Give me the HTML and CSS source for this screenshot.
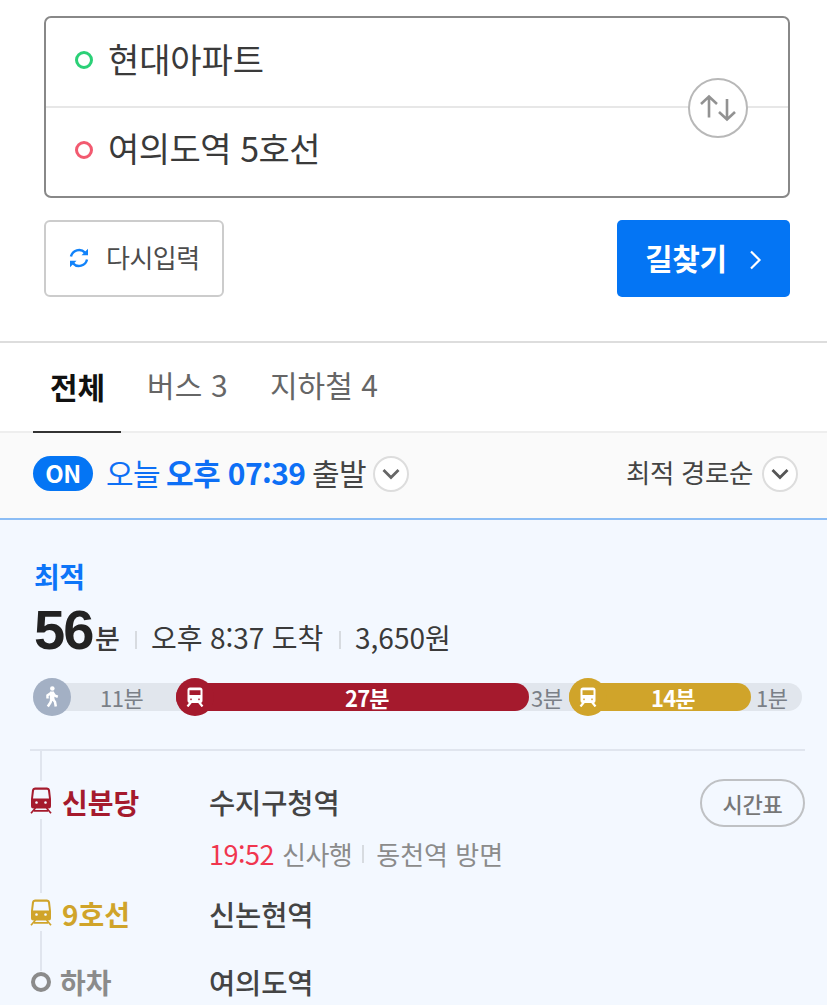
FILE: index.html
```html
<!DOCTYPE html>
<html lang="ko">
<head>
<meta charset="utf-8">
<title>길찾기</title>
<link rel="stylesheet" href="styles.css">
</head>
<body>
<svg class="defs" width="0" height="0" aria-hidden="true">
  <symbol id="train" viewBox="0 0 22 27">
    <path fill="currentColor" fill-rule="evenodd" d="M5 0.5H17Q19.6 0.5 20 3L21 12V19Q21 21.5 18.5 21.5H3.500Q1 21.500 1 19V12L2 3Q2.400 0.500 5 0.500ZM5 2.800Q4.100 2.800 4 3.700L3 11.500H19L18 3.700Q17.900 2.800 17 2.800ZM6.500 14.200a1.300 1.300 0 1 0 0.010 0ZM15.500 14.200a1.300 1.300 0 1 0 0.010 0Z"/>
    <path fill="none" stroke="currentColor" stroke-width="1.700" d="M5.500 21L1 26.300M16.500 21L21 26.300M4 23.800H18"/>
  </symbol>
  <symbol id="train-solid" viewBox="0 0 18 20">
    <path fill="currentColor" fill-rule="evenodd" d="M4 0.500H14Q16.500 0.500 16.500 3V13.500Q16.500 16 14 16H4Q1.500 16 1.500 13.500V3Q1.500 0.500 4 0.500ZM3.500 3.200V8H14.500V3.200ZM5 11.500a0.800 0.800 0 1 0 0.010 0ZM13 11.500a0.800 0.800 0 1 0 0.010 0Z"/>
    <path fill="none" stroke="currentColor" stroke-width="2.200" d="M5.500 14.500L1.500 19.500M12.500 14.500L16.500 19.500"/>
  </symbol>
</svg>

<section class="search">
  <div class="fields">
    <div class="field"><i class="ring start"></i><span>현대아파트</span></div>
    <div class="field"><i class="ring goal"></i><span>여의도역 5호선</span></div>
    <button class="swap" aria-label="swap"><svg width="38" height="28" viewBox="0 0 38 28" fill="none" stroke="#929292" stroke-width="2.600"><path d="M10 23.500V3M2 10L10 2.500L18 10"/><path d="M28 5V25M20 18L28 25.500L36 18"/></svg></button>
  </div>
  <div class="actions">
    <button class="reset">
      <svg width="22" height="22" viewBox="0 0 22 22"><path d="M3 9.500A8.200 8.200 0 0 1 17 5.600M19 12.500A8.200 8.200 0 0 1 5 16.400" fill="none" stroke="#1283fa" stroke-width="2.400"/><path d="M20 1.800V8.300H13.500ZM2 20.200V13.700H8.500Z" fill="#1283fa"/></svg>
      <span>다시입력</span>
    </button>
    <button class="go"><span>길찾기</span><svg width="13" height="20" viewBox="0 0 13 20" fill="none" stroke="#fff" stroke-width="2.200"><path d="M2 1.500L10.500 10L2 18.500"/></svg></button>
  </div>
</section>

<nav class="tabs">
  <a class="tab on">전체</a><a class="tab bus">버스 3</a><a class="tab sub">지하철 4</a>
</nav>

<div class="filter">
  <span class="badge">ON</span>
  <span class="today">오늘</span><b class="time">오후 07:39</b><span class="depart">출발</span>
  <span class="drop"><svg width="20" height="12" viewBox="0 0 20 12" fill="none" stroke="#666" stroke-width="2.800"><path d="M2.500 2L10 9.500L17.500 2"/></svg></span>
  <span class="sort">최적 경로순</span>
  <span class="drop"><svg width="20" height="12" viewBox="0 0 20 12" fill="none" stroke="#555" stroke-width="2.800"><path d="M2.500 2L10 9.500L17.500 2"/></svg></span>
</div>

<main class="result">
  <div class="best">최적</div>
  <div class="summary">
    <b class="num">56</b><span class="unit">분</span><i class="bar"></i><span class="arrive">오후 8:37 도착</span><i class="bar"></i><span class="fare">3,650원</span>
  </div>
  <div class="track">
    <div class="walk first"><span class="dot gray"><svg width="16" height="22" viewBox="0 0 16 22"><circle cx="8.300" cy="2.500" r="2.300" fill="#fff"/><path d="M8 6V13M7 7L3.500 9.500V12.500M9 7L11 9.800L13.800 10.800M7.800 12.500L6.500 16.500L3.800 20.500M8.500 12.500L11 16L11.800 20.500" fill="none" stroke="#fff" stroke-width="2.500"/><path d="M6 5.500H10L10.500 13.500H5.800Z" fill="#fff"/></svg></span><span class="mins">11분</span></div>
    <div class="ride red"><span class="dot"><svg width="18" height="20"><use href="#train-solid"/></svg></span><b class="mins">27분</b></div>
    <div class="walk mid"><span class="mins">3분</span></div>
    <div class="ride gold"><span class="dot"><svg width="18" height="20"><use href="#train-solid"/></svg></span><b class="mins">14분</b></div>
    <div class="walk last"><span class="mins">1분</span></div>
  </div>

  <div class="steps">
    <div class="step one">
      <div class="rail"><i class="line lead"></i><span class="icon"><svg width="22" height="27"><use href="#train"/></svg></span><i class="line"></i></div>
      <b class="name">신분당</b>
      <div class="info">
        <div class="station">수지구청역</div>
        <div class="next"><span class="clock">19:52</span><span class="bound">신사행</span><i class="bar"></i><span class="toward">동천역 방면</span></div>
      </div>
      <button class="table">시간표</button>
    </div>
    <div class="step two">
      <div class="rail"><span class="icon"><svg width="22" height="27"><use href="#train"/></svg></span><i class="line"></i></div>
      <b class="name">9호선</b>
      <div class="info"><div class="station">신논현역</div></div>
    </div>
    <div class="step three">
      <div class="rail"><i class="stop"></i></div>
      <b class="name">하차</b>
      <div class="info"><div class="station">여의도역</div></div>
    </div>
  </div>
</main>
</body>
</html>
```
FILE: styles.css
```css
* { box-sizing: border-box; }
body {
  margin: 0;
  width: 827px;
  height: 1005px;
  overflow: hidden;
  background: #fff;
  color: #3a3a3a;
  font-family: "Noto Sans CJK KR", sans-serif;
  display: flex;
  flex-direction: column;
}
button { font: inherit; color: inherit; margin: 0; padding: 0; background: none; border: 0; }
svg { display: block; flex: none; }
.defs { position: absolute; }
span, b, i, a { flex: none; white-space: nowrap; }

.search { height: 343px; padding: 16px 37px 0 44px; border-bottom: 2px solid #ddd; flex: none; }
.fields { position: relative; height: 182px; border: 2px solid #888; border-radius: 7px; }
.field { height: 88px; display: flex; align-items: center; padding: 0 0 7px 29px; font-size: 34px; line-height: 40px; letter-spacing: -0.1px; }
.field + .field { border-top: 2px solid #e7e7e7; height: 90px; padding-bottom: 8px; letter-spacing: -0.5px; }
.field span { margin-left: 15px; }
.ring { width: 18px; height: 18px; border: 3px solid #2bd077; border-radius: 50%; margin-top: 3px; }
.ring.goal { border-color: #f25a70; }
.swap { position: absolute; right: 40px; top: 60px; width: 60px; height: 60px; border: 2px solid #b8b8b8; border-radius: 50%; background: #fff; display: flex; align-items: center; justify-content: center; }
.actions { display: flex; justify-content: space-between; margin-top: 22px; }
.reset { width: 180px; height: 77px; border: 2px solid #ccc; border-radius: 6px; display: flex; align-items: center; padding-left: 22px; font-size: 26px; letter-spacing: -0.5px; color: #4c4c4c; }
.reset svg { margin-top: -1px; }
.reset span { margin: -4px 0 0 16px; }
.go { width: 173px; height: 77px; background: #0475f4; border-radius: 5px; display: flex; align-items: center; padding-left: 28px; color: #fff; font-size: 30px; font-weight: 700; letter-spacing: -0.3px; }
.go span { margin-top: -4px; }
.go svg { margin: 2px 0 0 22px; }

.tabs { height: 90px; flex: none; display: flex; padding-left: 33px; border-bottom: 2px solid #eee; font-size: 30px; line-height: 83px; color: #666; }
.tab.on { width: 88px; height: 90px; padding-left: 17px; font-weight: 700; color: #111; border-bottom: 2px solid #333; line-height: 86px; }
.tab.bus { margin-left: 26px; width: 123px; letter-spacing: 0.1px; }
.tab.sub { letter-spacing: 0; }

.filter { height: 87px; flex: none; display: flex; align-items: center; padding: 0 29px 4px 33px; background: #fafafa; border-bottom: 2px solid #8cbdf5; font-size: 30px; line-height: 40px; letter-spacing: -0.6px; color: #444; }
.badge { width: 60px; height: 35px; border-radius: 18px; background: #0475f4; color: #fff; font-size: 24px; font-weight: 700; line-height: 33px; text-align: center; }
.today, .time { color: #0d6ff5; }
.today, .time, .depart, .sort { margin-top: -3px; }
.today { margin-left: 13px; width: 60px; }
.time { width: 146px; }
.depart { width: 61px; }
.drop { width: 36px; height: 36px; border: 2px solid #ddd; border-radius: 50%; background: #fff; display: flex; align-items: center; justify-content: center; margin-top: 1px; }
.sort { margin-left: auto; margin-right: 9px; font-size: 26.500px; letter-spacing: -0.400px; }

.result { flex: 1; background: #f3f8ff; padding-left: 30px; }
.best { margin: 37px 0 0 4px; height: 40px; font-size: 28px; line-height: 38px; font-weight: 700; letter-spacing: -0.6px; color: #0d75f8; }
.summary { height: 60px; margin: 0 0 0 4px; display: flex; align-items: baseline; font-size: 28px; line-height: 66px; letter-spacing: -0.4px; }
.num { width: 59px; font-family: "Liberation Sans", sans-serif; font-size: 56px; letter-spacing: -1.800px; color: #222; }
.unit { width: 40px; margin-left: 2px; font-size: 27px; font-weight: 500; letter-spacing: 0; }
.bar { width: 2px; height: 18px; background: #d7dbe0; }
.arrive { margin-left: 14px; width: 188px; letter-spacing: -0.1px; }
.fare { margin-left: 14px; letter-spacing: 0; }

.track { margin: 26px 0 0 3px; width: 769px; height: 28px; border-radius: 14px; background: #e1e6ed; display: flex; font-size: 22px; line-height: 29px; letter-spacing: -0.4px; color: #7a7f87; }
.walk, .ride { display: flex; align-items: center; flex: none; }
.walk.first { width: 143px; }
.walk.mid { width: 40px; }
.walk.mid .mins { margin-left: 2px; }
.walk.last .mins { margin-left: 5px; }
.walk.first .mins { margin-left: 29px; }
.ride { border-radius: 14px; color: #fff; }
.red { width: 353px; background: #a51a2d; }
.gold { width: 182px; background: #d0a42a; }
.dot { width: 38px; height: 38px; border-radius: 50%; display: flex; align-items: center; justify-content: center; background: inherit; }
.dot.gray { background: #a3b0c4; }
.ride .mins { letter-spacing: -0.8px; }
.red .mins { margin-left: 131px; }
.gold .mins { margin-left: 44px; }

.steps { margin-top: 38px; width: 775px; border-top: 2px solid #e0e5ee; }
.step { display: flex; align-items: flex-start; }
.one { height: 142px; color: #a51a2d; }
.two { height: 78px; color: #d0a42a; }
.three { height: 34px; color: #8b8b8b; }
.rail { width: 22px; height: 100%; display: flex; flex-direction: column; align-items: center; }
.icon { height: 38px; display: flex; align-items: center; padding-top: 1px; }
.line { width: 2px; flex: 1; background: #e0e5ee; }
.line.lead { flex: none; height: 30px; }
.stop { width: 20px; height: 20px; border: 4px solid #8b8b8b; border-radius: 50%; margin-top: 1px; }
.name { width: 148px; margin-left: 10px; font-size: 28px; line-height: 40px; }
.station { margin-left: -1px; font-size: 28.500px; line-height: 40px; font-weight: 500; letter-spacing: -0.1px; color: #444; }
.one .name, .one .info { padding-top: 31px; }
.two .name, .two .info { padding-top: 1px; }
.three .name { margin-left: 8px; width: 150px; margin-top: -9px; }
.three .info { margin-top: -9px; }
.next { display: flex; align-items: center; height: 40px; margin: 12px 0 0 -1px; font-size: 26px; line-height: 40px; letter-spacing: -0.5px; color: #8b8b8b; }
.next .bar { margin: 0 12px 0 10px; }
.toward { letter-spacing: 0; }
.clock { width: 73px; color: #f0364f; font-size: 27px; }
.table { margin: 28px 0 0 auto; width: 105px; height: 48px; border: 2px solid #bfc1c4; border-radius: 24px; font-size: 22px; line-height: 42px; font-weight: 500; color: #777; letter-spacing: -0.2px; }
```
